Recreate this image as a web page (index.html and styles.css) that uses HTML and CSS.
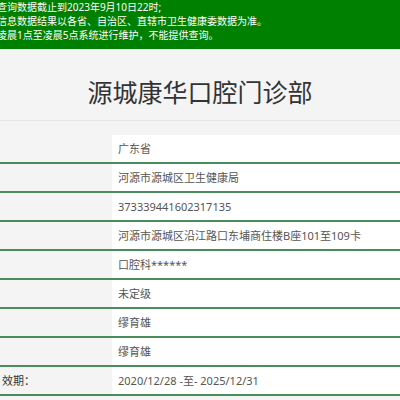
FILE: index.html
```html
<!DOCTYPE html>
<html lang="zh-CN">
<head>
<meta charset="utf-8">
<link rel="stylesheet" href="styles.css">
</head>
<body>
<div class="notice">
  <p>查询数据截止到2023年9月10日22时;</p>
  <p>信息数据结果以各省、自治区、直辖市卫生健康委数据为准。</p>
  <p>凌晨1点至凌晨5点系统进行维护，不能提供查询。</p>
</div>
<div class="title-box">
  <h1 class="title">源城康华口腔门诊部</h1>
</div>
<div class="table">
  <div class="row"><div class="label"></div><div class="value">广东省</div></div>
  <div class="row"><div class="label"></div><div class="value">河源市源城区卫生健康局</div></div>
  <div class="row"><div class="label"></div><div class="value">373339441602317135</div></div>
  <div class="row"><div class="label"></div><div class="value">河源市源城区沿江路口东埔商住楼B座101至109卡</div></div>
  <div class="row"><div class="label"></div><div class="value">口腔科******</div></div>
  <div class="row"><div class="label"></div><div class="value">未定级</div></div>
  <div class="row"><div class="label"></div><div class="value">缪育雄</div></div>
  <div class="row"><div class="label"></div><div class="value">缪育雄</div></div>
  <div class="row"><div class="label">效期：</div><div class="value">2020/12/28 -至- 2025/12/31</div></div>
</div>
</body>
</html>
```
FILE: styles.css
```css
html, body {
  margin: 0;
  padding: 0;
}
body {
  background: #f4f4f4;
  font-family: "Noto Sans", "Noto Sans CJK SC", sans-serif;
  overflow: hidden;
}
.notice {
  background: #008000;
  color: #ffffff;
  font-size: 10px;
  line-height: 14px;
  padding: 0 0 7px;
  height: 42px;
}
.notice p {
  margin: 0 0 0 -3px;
  white-space: nowrap;
}
.title-box {
  padding: 28px 0 13px;
  border-bottom: 1px solid #e4e4e4;
}
.title {
  margin: 0;
  text-align: center;
  font-size: 25px;
  line-height: 30px;
  font-weight: normal;
  color: #333333;
}
.table {
  margin-top: 14px;
}
.row {
  display: grid;
  grid-template-columns: 112px 1fr;
  height: 27px;
  border-bottom: 2px solid #4a8c5c;
  font-size: 11px;
  line-height: 27px;
}
.label {
  color: #333333;
  padding-left: 2px;
}
.value {
  background: #ffffff;
  color: #555555;
  padding-left: 6px;
  white-space: nowrap;
}
```
